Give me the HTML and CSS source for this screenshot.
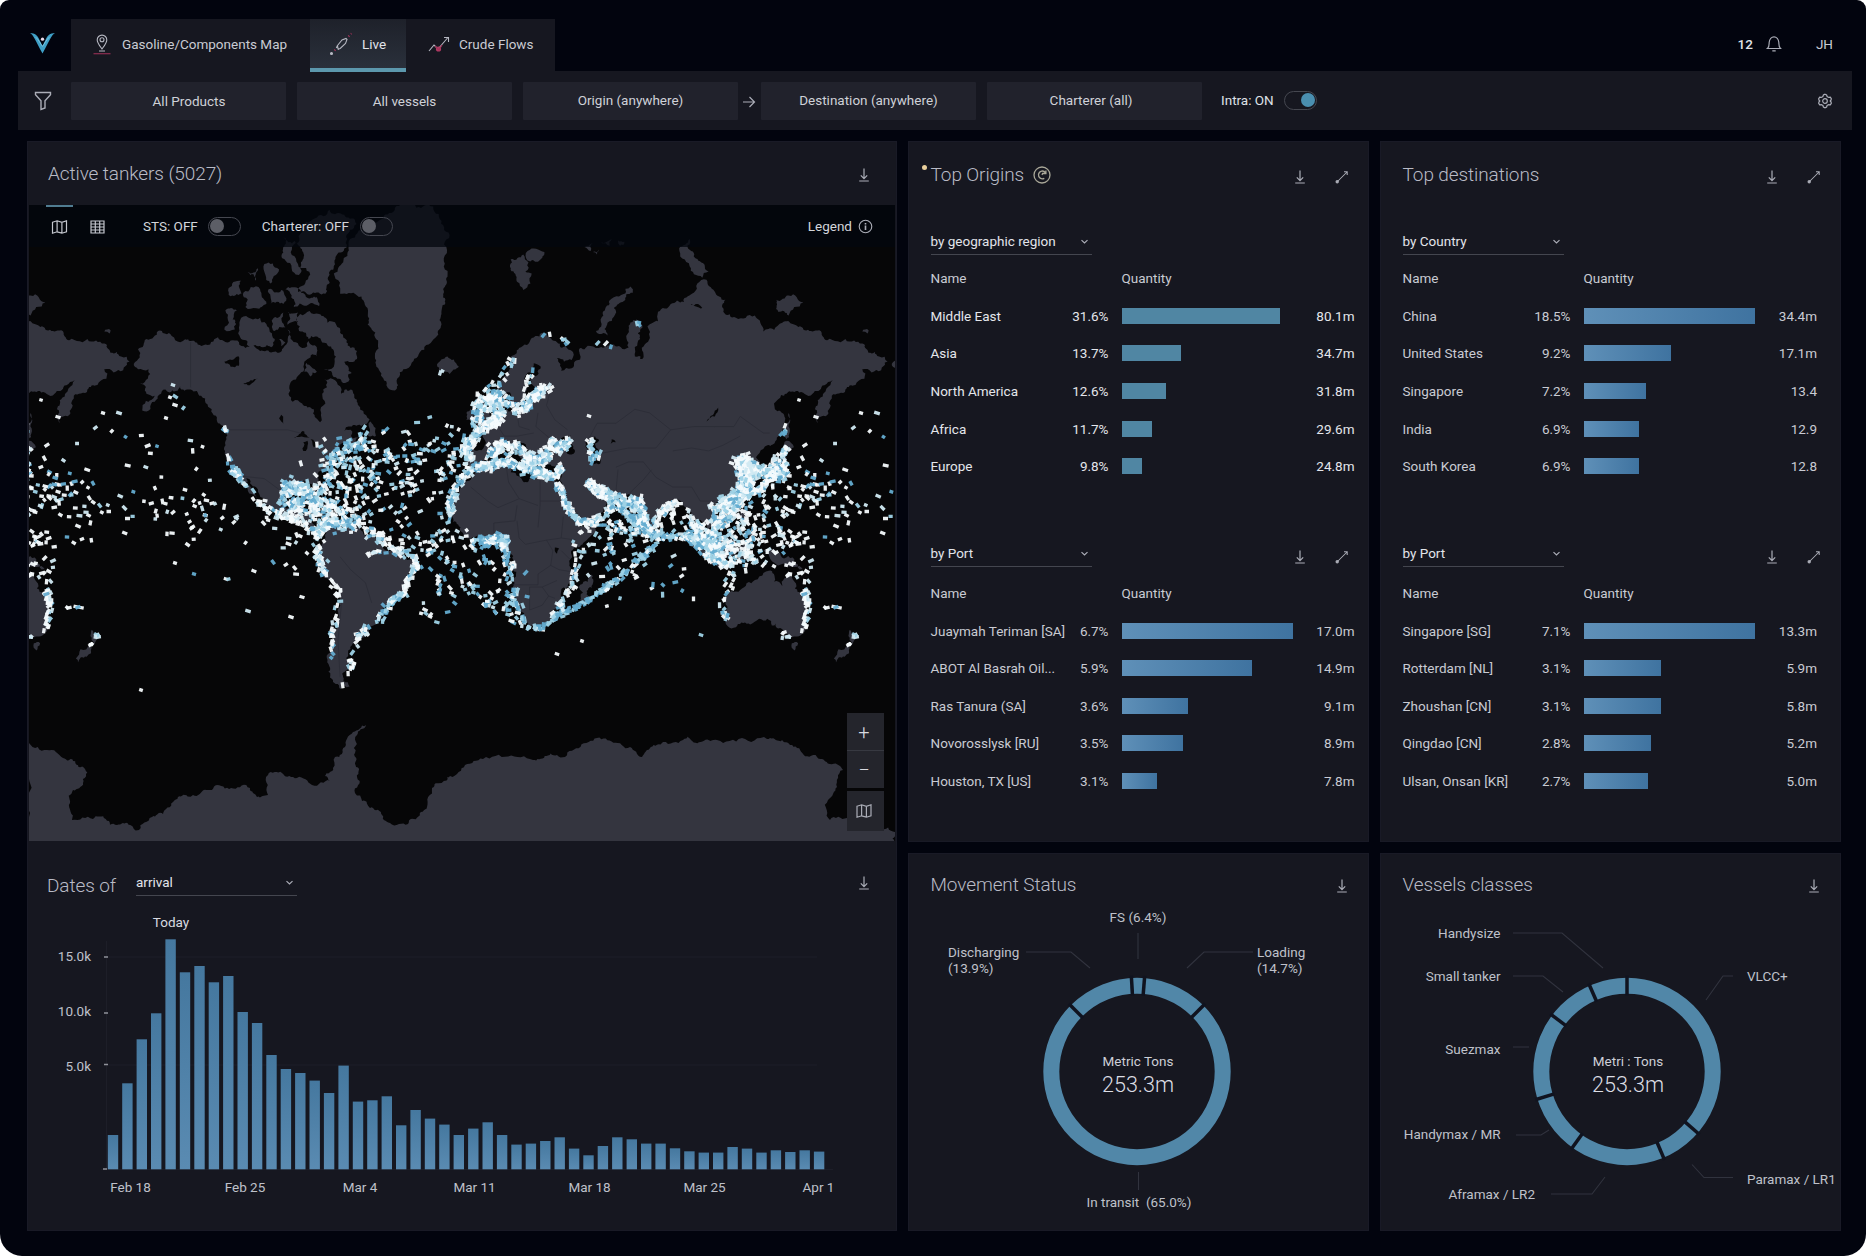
FILE: index.html
```html
<!DOCTYPE html>
<html lang="en">
<head>
<meta charset="utf-8">
<title>Tanker flows – Live</title>
<link rel="stylesheet" href="styles.css">
</head>
<body>
<svg class="sprite" aria-hidden="true">
  <symbol id="i-download" viewBox="0 0 16 16"><path d="M8 1.500v10M4.800 8.400 8 11.600l3.200-3.200M3.200 14h9.600"/></symbol>
  <symbol id="i-expand" viewBox="0 0 16 16"><path d="M3 13 13 3M10 2.800h3.200V6" stroke-width="1.050"/><circle cx="3.200" cy="12.800" r="1.100" fill="currentColor"/></symbol>
  <symbol id="i-chevron" viewBox="0 0 16 16"><path d="m4.800 6.500 3.200 3 3.200-3"/></symbol>
  <symbol id="i-map" viewBox="0 0 16 16"><path d="M1 3.200 5.600 1.800l4.800 1.600L15 1.800v11L10.400 14.200 5.600 12.800 1 14.200zM5.600 1.800v11M10.400 3.400v10.800"/></symbol>
  <symbol id="i-grid" viewBox="0 0 16 16"><path d="M1.500 2h13v12h-13zM1.500 5h13M1.500 8h13M1.500 11h13M5.800 2v12M10.200 2v12"/></symbol>
  <symbol id="i-info" viewBox="0 0 16 16"><circle cx="8" cy="8" r="6.700"/><path d="M8 7v4.600M8 4.300v1.500" stroke-width="1.700"/></symbol>
</svg>
<div class="app">
  <header class="topbar">
    <svg class="logo" viewBox="0 0 28 24"><path d="M1 1c5 0 8 3 9.500 6.500L14 14.500l3.500-7C19 4 22 1 27 1 23 3.500 22 8 14 22.500 6 8 5 3.500 1 1z" fill="#3e9fc6"/><path d="M7 5.500c3 2.500 5 7 7 9.500 2-2.500 4-7 7-9.500" fill="none" stroke="#7cc6df" stroke-width="1"/><circle cx="14" cy="7.500" r="1.700" fill="#e9d8e6"/></svg>
    <nav class="tabs">
      <a class="tab tab-map">
        <svg class="tab-icon" viewBox="0 0 20 24"><path d="M10 17c-3-4.200-4.800-6.400-4.800-9.100a4.800 4.800 0 0 1 9.600 0c0 2.700-1.800 4.900-4.800 9.100z"/><circle cx="10" cy="7.800" r="2"/><path d="M7 19h6"/><path d="M1.500 21.700h17" class="accent"/></svg>
        Gasoline/Components Map</a>
      <a class="tab tab-live active">
        <svg class="tab-icon wide" viewBox="0 0 24 24"><path d="M8.500 13.500 13 8l4-1.500 1 1-1.500 4-5.300 5-2.200.3zM8.500 13.500l-1.200 2.600M11.200 16.500l-2.400 1"/><path d="M19.500 4.500l.8-.8M22 2l.5-.5M5.500 18.500l.8-.8" class="accent" stroke-width="2"/><circle cx="2.500" cy="21.500" r="1" fill="currentColor"/></svg>
        Live</a>
      <a class="tab tab-flows">
        <svg class="tab-icon wide" viewBox="0 0 24 24"><path d="m2 19 5-6 4 4 9.500-11M17 5.500h4.500V10"/><circle cx="11.500" cy="17" r="2.600" fill="#b03a63" stroke="none"/><path d="m8 14 4 4 3-5" class="accent"/></svg>
        Crude Flows</a>
    </nav>
    <div class="user">
      <b class="count">12</b>
      <svg class="icon bell" viewBox="0 0 16 18"><path d="M1.500 13.500C3.500 12 3 9 3.200 7.200 3.500 4.200 5.500 1.800 8 1.800s4.500 2.400 4.800 5.400c.2 1.800-.3 4.800 1.700 6.300zM6.300 15.800h3.400"/></svg>
      <span class="initials">JH</span>
    </div>
  </header>

  <div class="filters">
    <svg class="icon funnel" viewBox="0 0 18 20"><path d="M1.500 1.500h15v2.300l-5.500 6V17l-4 1.500V9.800l-5.500-6z"/></svg>
    <button class="filter products">All Products</button>
    <button class="filter">All vessels</button>
    <button class="filter raised">Origin (anywhere)</button>
    <svg class="icon arrow" viewBox="0 0 14 14"><path d="M1 7h11.500M7.500 2l5 5-5 5"/></svg>
    <button class="filter raised">Destination (anywhere)</button>
    <button class="filter raised charterer">Charterer (all)</button>
    <span class="intra">Intra: ON</span><i class="toggle on"></i>
    <svg class="icon gear" viewBox="0 0 16 16"><path d="M8 1.200 9.600 2l.5 1.500 1.600.9 1.600-.3 1 1.600-.2 1.300-.9 1 .9 1 .2 1.300-1 1.600-1.600-.3-1.600.9L9.600 14 8 14.800 6.400 14l-.5-1.500-1.600-.9-1.600.3-1-1.600.2-1.300.9-1-.9-1-.2-1.300 1-1.600 1.600.3 1.600-.9L6.400 2z"/><circle cx="8" cy="8" r="2.300"/></svg>
  </div>

  <main class="board">
    <div class="panel left">
      <section class="tankers">
        <div class="head"><h2>Active tankers (5027)</h2><svg class="icon"><use href="#i-download"/></svg></div>
        <div class="map">
          <svg class="world" viewBox="0 0 866 636" id="world"></svg>
          <div class="map-bar">
            <span class="view current"><svg class="icon"><use href="#i-map"/></svg></span>
            <span class="view"><svg class="icon"><use href="#i-grid"/></svg></span>
            <span class="opt sts">STS: OFF</span><i class="toggle"></i>
            <span class="opt cht">Charterer: OFF</span><i class="toggle"></i>
            <span class="legend">Legend</span><svg class="icon info"><use href="#i-info"/></svg>
          </div>
          <div class="zoomer">
            <button>+</button><button class="minus">−</button>
            <button class="mini"><svg class="icon"><use href="#i-map"/></svg></button>
          </div>
        </div>
      </section>
      <section class="dates">
        <div class="dates-head"><h2>Dates of</h2><div class="select">arrival<svg class="icon"><use href="#i-chevron"/></svg></div><svg class="icon dl"><use href="#i-download"/></svg></div>
        <svg class="histogram" viewBox="0 0 870 325">
          <defs><linearGradient id="col" x1="0" y1="0" x2="0" y2="1"><stop offset="0" stop-color="#45789f"/><stop offset="1" stop-color="#5a8bb2"/></linearGradient></defs>
          <path class="rule" d="M79 51H790M79 159H790M74 263.500H806M79.500 35V263"/>
          <path class="tick" d="M77 51h4M77 107h4M77 158.500h4M76 263h4"/>
          <g id="columns" fill="url(#col)"></g>
          <g class="axis end"><text x="64" y="54.500">15.0k</text><text x="64" y="110">10.0k</text><text x="64" y="164.500">5.0k</text></g>
          <g class="axis mid"><text x="103.500" y="285.500">Feb 18</text><text x="218" y="285.500">Feb 25</text><text x="333" y="285.500">Mar 4</text><text x="447.500" y="285.500">Mar 11</text><text x="562.500" y="285.500">Mar 18</text><text x="677.500" y="285.500">Mar 25</text><text x="791.500" y="285.500">Apr 1</text></g>
          <text class="today" x="144" y="20.500">Today</text>
        </svg>
      </section>
    </div>

    <section class="panel ranks origins">
      <div class="head"><i class="dot"></i><h2>Top Origins</h2><svg class="badge" viewBox="0 0 18 18"><circle cx="9" cy="9" r="8"/><path d="M12.500 6.800C10.800 4 6.200 4.400 5.500 8.400c-.4 3.400 3 5.300 5.800 3.900M12.900 4.600v2.900H9.600l-.6 1.500"/></svg><span class="tools"><svg class="icon"><use href="#i-download"/></svg><svg class="icon"><use href="#i-expand"/></svg></span></div>
      <div class="rank strong">
        <div class="pick"><div class="select">by geographic region<svg class="icon"><use href="#i-chevron"/></svg></div></div>
        <div class="row th"><span>Name</span><span></span><span>Quantity</span></div>
        <div class="row"><span>Middle East</span><em>31.6%</em><i class="bar" style="width:158px"></i><b>80.1m</b></div>
        <div class="row"><span>Asia</span><em>13.7%</em><i class="bar" style="width:59px"></i><b>34.7m</b></div>
        <div class="row"><span>North America</span><em>12.6%</em><i class="bar" style="width:44px"></i><b>31.8m</b></div>
        <div class="row"><span>Africa</span><em>11.7%</em><i class="bar" style="width:30px"></i><b>29.6m</b></div>
        <div class="row"><span>Europe</span><em>9.8%</em><i class="bar" style="width:20px"></i><b>24.8m</b></div>
      </div>
      <div class="rank ports">
        <div class="pick"><div class="select">by Port<svg class="icon"><use href="#i-chevron"/></svg></div><span class="tools"><svg class="icon"><use href="#i-download"/></svg><svg class="icon"><use href="#i-expand"/></svg></span></div>
        <div class="row th"><span>Name</span><span></span><span>Quantity</span></div>
        <div class="row"><span>Juaymah Teriman [SA]</span><em>6.7%</em><i class="bar" style="width:171px"></i><b>17.0m</b></div>
        <div class="row"><span>ABOT Al Basrah Oil...</span><em>5.9%</em><i class="bar" style="width:130px"></i><b>14.9m</b></div>
        <div class="row"><span>Ras Tanura (SA]</span><em>3.6%</em><i class="bar" style="width:66px"></i><b>9.1m</b></div>
        <div class="row"><span>Novorosslysk [RU]</span><em>3.5%</em><i class="bar" style="width:61px"></i><b>8.9m</b></div>
        <div class="row"><span>Houston, TX [US]</span><em>3.1%</em><i class="bar" style="width:35px"></i><b>7.8m</b></div>
      </div>
    </section>

    <section class="panel ranks destinations">
      <div class="head"><h2>Top destinations</h2><span class="tools"><svg class="icon"><use href="#i-download"/></svg><svg class="icon"><use href="#i-expand"/></svg></span></div>
      <div class="rank">
        <div class="pick"><div class="select">by Country<svg class="icon"><use href="#i-chevron"/></svg></div></div>
        <div class="row th"><span>Name</span><span></span><span>Quantity</span></div>
        <div class="row"><span>China</span><em>18.5%</em><i class="bar" style="width:171px"></i><b>34.4m</b></div>
        <div class="row"><span>United States</span><em>9.2%</em><i class="bar" style="width:87px"></i><b>17.1m</b></div>
        <div class="row"><span>Singapore</span><em>7.2%</em><i class="bar" style="width:62px"></i><b>13.4</b></div>
        <div class="row"><span>India</span><em>6.9%</em><i class="bar" style="width:55px"></i><b>12.9</b></div>
        <div class="row"><span>South Korea</span><em>6.9%</em><i class="bar" style="width:55px"></i><b>12.8</b></div>
      </div>
      <div class="rank ports">
        <div class="pick"><div class="select">by Port<svg class="icon"><use href="#i-chevron"/></svg></div><span class="tools"><svg class="icon"><use href="#i-download"/></svg><svg class="icon"><use href="#i-expand"/></svg></span></div>
        <div class="row th"><span>Name</span><span></span><span>Quantity</span></div>
        <div class="row"><span>Singapore [SG]</span><em>7.1%</em><i class="bar" style="width:171px"></i><b>13.3m</b></div>
        <div class="row"><span>Rotterdam [NL]</span><em>3.1%</em><i class="bar" style="width:77px"></i><b>5.9m</b></div>
        <div class="row"><span>Zhoushan [CN]</span><em>3.1%</em><i class="bar" style="width:77px"></i><b>5.8m</b></div>
        <div class="row"><span>Qingdao [CN]</span><em>2.8%</em><i class="bar" style="width:67px"></i><b>5.2m</b></div>
        <div class="row"><span>Ulsan, Onsan [KR]</span><em>2.7%</em><i class="bar" style="width:64px"></i><b>5.0m</b></div>
      </div>
    </section>

    <section class="panel rings">
      <div class="head"><h2>Movement Status</h2><svg class="icon"><use href="#i-download"/></svg></div>
      <svg class="ring" viewBox="0 0 461 316">
        <circle class="donut" cx="229" cy="156.500" r="85.700"/>
        <g class="cuts" data-cx="229" data-cy="156.500" data-angles="-45.2 -3.4 4.6 45.2"></g>
        <path class="leader" d="M230 18v26M118 37h45l19 16M345 37h-49l-17 16M230.500 257v18"/>
        <g class="label"><text class="mid" x="230" y="6.500">FS (6.4%)</text><text x="40" y="41.500">Discharging</text><text x="40" y="57.500">(13.9%)</text><text x="349" y="41.500">Loading</text><text x="349" y="57.500">(14.7%)</text><text class="mid" x="231" y="291.500" xml:space="preserve">In transit  (65.0%)</text></g>
        <text class="unit" x="230" y="150.500">Metric Tons</text><text class="total" x="230" y="177">253.3m</text>
      </svg>
    </section>

    <section class="panel rings">
      <div class="head"><h2>Vessels classes</h2><svg class="icon"><use href="#i-download"/></svg></div>
      <svg class="ring" viewBox="0 0 461 316">
        <circle class="donut" cx="247" cy="156.500" r="85.700"/>
        <g class="cuts" data-cx="247" data-cy="156.500" data-angles="0 131 157 215.7 252.900 306.900 336.500"></g>
        <path class="leader" d="M133 18h49l41 35M133 61h30l20 16M133 132h16M136 220h25l8-5M171 279h41l13-17M353 61h-10l-17 24M353 262.500h-29l-12-13"/>
        <g class="label"><text class="end" x="120.500" y="22.500">Handysize</text><text class="end" x="120.500" y="65.500">Small tanker</text><text class="end" x="120.500" y="138.500">Suezmax</text><text class="end" x="120.500" y="224">Handymax / MR</text><text class="end" x="155" y="284">Aframax / LR2</text><text x="367" y="65.500">VLCC+</text><text x="367" y="269">Paramax / LR1</text></g>
        <text class="unit" x="248" y="150.500">Metri : Tons</text><text class="total" x="248" y="177">253.3m</text>
      </svg>
    </section>
  </main>
</div>
<script src="charts.js"></script>
</body>
</html>
```
FILE: styles.css
```css
* { box-sizing: border-box; }
html { background: #fff; }
body { margin: 0; font-family: Roboto, "Liberation Sans", sans-serif; font-size: 13.5px; color: #c9cbd3; }
h2 { margin: 0; font-size: 19px; font-weight: 300; color: #b9bbc6; letter-spacing: -.1px; }
button { font: inherit; color: inherit; border: 0; padding: 0; }
i, em { font-style: normal; }
.sprite { position: absolute; width: 0; height: 0; }
.icon { width: 16px; height: 16px; fill: none; stroke: currentColor; stroke-width: 1.2; flex: none; color: #abadb7; }

.app { width: 1866px; height: 1256px; padding: 19px 14px 25px 18px; background: #02040e; border-radius: 9px 9px 22px 22px; overflow: hidden; }

.topbar { display: flex; height: 52px; align-items: center; }
.logo { width: 27px; height: 23px; margin: 0 15px 3px 11px; }
.tabs { display: flex; height: 53px; background: #161720; align-self: flex-start; width: 484px; }
.tab { display: flex; align-items: center; padding-bottom: 4px; font-size: 13.5px; }
.tab-icon { width: 20px; height: 24px; fill: none; stroke: #b5b7c1; stroke-width: 1.1; color: #b5b7c1; flex: none; }
.tab-icon.wide { width: 24px; }
.tab-icon .accent { stroke: #a33258; }
.tab-map { width: 239px; padding-left: 21px; gap: 10px; }
.tab-live { width: 96px; padding-left: 19px; gap: 9px; border-bottom: 4px solid #5c98ad; padding-bottom: 0; background: linear-gradient(#1e212a, #2a303b); color: #e2e4ea; }
.tab-flows { padding-left: 21px; gap: 8px; }
.user { display: flex; align-items: center; margin-left: auto; padding: 0 19px 2px 0; }
.count { font-weight: 500; color: #dfe1e8; }
.bell { width: 16px; height: 18px; margin: 0 34px 0 13px; }

.filters { display: flex; align-items: center; height: 59px; background: #161720; padding: 0 19px 0 16px; }
.funnel { width: 18px; height: 20px; margin-right: 19px; stroke-width: 1.4; }
.filter { width: 215px; height: 38px; background: #21222c; color: #cfd1d8; border-radius: 1px; margin-right: 11px; }
.filter.products { padding-left: 21px; }
.filter.raised { padding-bottom: 2px; }
.filter:nth-of-type(3) { margin-right: 4px; }
.arrow { width: 14px; height: 14px; margin: 2px 5px 0 0; }
.filter.charterer { padding-right: 7px; margin-right: 19px; }
.intra { color: #dfe1e7; padding-bottom: 1px; margin-right: 10px; }
.gear { margin-left: auto; }
.toggle { width: 33px; height: 19px; border: 1.500px solid #454750; border-radius: 10px; padding: 1px; flex: none; }
.toggle::before { content: ""; display: block; width: 14px; height: 14px; border-radius: 7px; background: #5c5e66; }
.toggle.on::before { margin-left: auto; background: #4a8fb0; }

.board { display: grid; grid-template-columns: 870px 461px 461px; grid-template-rows: 701px 378px; gap: 11px; margin: 11px 0 0 9px; }
.panel { background: #161720; box-shadow: inset 0 0 0 1px #191a26; }
.left { grid-row: span 2; }
.head { display: flex; align-items: center; height: 67px; }
.tools { display: flex; gap: 26px; margin-left: auto; }

.tankers .head { height: 64px; padding: 0 25px 0 21px; }
.tankers .head .icon { margin: 3px 0 0 auto; }
.map { position: relative; height: 636px; margin: 0 2px; background: #060607; overflow: hidden; }
.world { display: block; width: 866px; height: 636px; }
.map-bar { position: absolute; inset: 0 0 auto 0; height: 42px; display: flex; align-items: center; padding: 0 22px 0 17px; background: rgba(3, 7, 15, .75); color: #d3d5db; }
.view { display: flex; align-items: center; justify-content: center; width: 27px; height: 42px; margin-right: 11px; border-top: 2px solid transparent; }
.view.current { border-color: #507c91; }
.view .icon { width: 17px; height: 16px; color: #c4c6ce; }
.sts { margin: 0 10px 0 21px; }
.cht { margin: 0 11px 0 21px; }
.legend { margin-left: auto; margin-right: 6px; }
.info { width: 15px; height: 15px; }
.zoomer { position: absolute; right: 11px; bottom: 10px; width: 37px; display: grid; grid-template-rows: 37px 38px 43px; }
.zoomer button { background: #24252c; color: #d8dae0; font-size: 20px; font-weight: 300; line-height: 36px; padding-right: 3px; }
.zoomer .minus { border-top: 1px solid #373941; }
.zoomer .mini { margin-top: 3px; display: flex; align-items: center; justify-content: center; }
.zoomer .icon { width: 16px; height: 16px; }

.select { display: flex; align-items: center; justify-content: space-between; width: 161px; height: 27px; border-bottom: 1.500px solid #44464f; color: #e2e4ea; }
.select .icon { width: 15px; height: 15px; stroke-width: 1.300; }

.dates-head { display: flex; align-items: flex-start; height: 65px; padding: 28px 25px 0 20px; }
.dates-head h2 { padding-top: 5px; width: 89px; }
.dates-head .dl { margin: 6px 0 0 auto; }
.histogram { display: block; width: 870px; height: 325px; }
.histogram text, .ring text { fill: #bfc1ca; font-size: 13.500px; }
.rule { stroke: #1d1e28; fill: none; }
.tick { stroke: #8f9199; stroke-width: 1.300; }
.end, .end text { text-anchor: end; }
.mid, .mid text, .histogram .today { text-anchor: middle; }
.histogram .today { fill: #d9dbe1; }

.ranks { padding: 0 14.500px 0 22.500px; }
.ranks .head .tools { padding-top: 5px; }
.origins .tools { margin-right: 4.500px; }
.destinations { padding-right: 24px; }
.destinations .tools { margin-right: -5px; }
.dot { width: 5px; height: 5px; border-radius: 3px; background: #e9cf9c; margin: -14px 2px 0 -9px; }
.dot + h2 { margin-left: 2px; }
.badge { width: 18px; height: 18px; margin: 1px 0 0 9px; fill: none; stroke: #a9a798; stroke-width: 1.300; }
.rank { padding-top: 20px; height: 285px; }
.rank.ports { padding-top: 47px; }
.pick { display: flex; margin-bottom: 4.500px; }
.ports .pick { margin-bottom: 7.300px; }
.pick .tools { padding-top: 9px; }
.row { display: grid; grid-template-columns: 128px 50px 13px 1fr auto; align-items: center; height: 37.600px; }
.row span:first-child { white-space: nowrap; }
.row em { text-align: right; }
.row .bar, .row.th span:last-child { grid-column: 4; }
.row b { font-weight: 400; }
.destinations .row { grid-template-columns: 118px 50px 13px 1fr auto; }
.strong .row:not(.th) { color: #e4e6eb; }
.bar { height: 16px; background: linear-gradient(90deg, #5f90b8, #3f73a0); }
.strong .bar { background: #5086a3; }

.rings .head { height: 62px; padding: 0 19px 0 22.500px; }
.rings .head .icon { margin: 4px 0 0 auto; }
.ring { display: block; width: 461px; height: 316px; overflow: visible; }
.donut { fill: none; stroke: #5187a8; stroke-width: 16; }
.cuts line { stroke: #10131f; stroke-width: 3.500; }
.leader { fill: none; stroke: #31333e; stroke-width: 1.100; }
.ring .unit { text-anchor: middle; fill: #cdcfd7; }
.ring .total { text-anchor: middle; font-size: 21.500px; font-weight: 300; fill: #dcdee5; }

.land { fill: #34353f; }
.water { fill: #060607; }
.borders { fill: none; stroke: #2b2c36; stroke-width: .8; }
.ships { fill: none; stroke-width: 3.300; opacity: .95; }
```
FILE: charts.js
```js
const NS = 'http://www.w3.org/2000/svg';
function add(parent, tag, attrs) {
  const el = document.createElementNS(NS, tag);
  for (const k in attrs) el.setAttribute(k, attrs[k]);
  parent.appendChild(el);
  return el;
}

/* arrivals histogram: column heights in px, one per day */
const arrivals = [34.3,86,130,156,230,197,203.300,187,193.300,157.300,146.300,114.300,100.300,96.300,88.700,76.300,103.700,67.700,69,73,44,59.300,50.700,44.700,34.300,40.700,47,34.300,24.700,25.700,28.300,32,20.700,14,23.300,32,30,25.700,25.700,21,18,16.700,16.700,22.300,20.700,16.700,19,17.300,19,17.700];
const columns = document.getElementById('columns');
arrivals.forEach((h, i) => add(columns, 'rect', { x: (80.8 + i * 14.41).toFixed(1), y: (263.3 - h).toFixed(1), width: 10.4, height: h }));

/* gaps between donut segments */
document.querySelectorAll('.cuts').forEach(g => {
  const cx = +g.dataset.cx, cy = +g.dataset.cy;
  g.dataset.angles.split(' ').forEach(a => {
    const s = Math.sin(a * Math.PI / 180), c = -Math.cos(a * Math.PI / 180);
    add(g, 'line', { x1: cx + 76 * s, y1: cy + 76 * c, x2: cx + 96 * s, y2: cy + 96 * c });
  });
});

/* seeded random so the map is the same on every load */
let seed = 5027;
function rnd() {
  seed = (seed + 0x6D2B79F5) | 0;
  let t = Math.imul(seed ^ (seed >>> 15), 1 | seed);
  t = (t + Math.imul(t ^ (t >>> 7), 61 | t)) ^ t;
  return ((t ^ (t >>> 14)) >>> 0) / 4294967296;
}
const gauss = () => (rnd() + rnd() + rnd() - 1.5) * 1.2;

/* Web Mercator */
const WORLD = 758;
const px = lon => 458.5 + lon * WORLD / 360;
const py = lat => 343.5 - WORLD / (2 * Math.PI) * Math.log(Math.tan(Math.PI / 4 + lat * Math.PI / 360));
const parse = s => s.trim().split(/\s+/).map(p => p.split(',').map(Number));
const project = s => parse(s).map(([a, b]) => [px(a), py(b)]);

function rough(pts, amp) {
  const out = [];
  const split = (a, b, d) => {
    const len = Math.hypot(b[0] - a[0], b[1] - a[1]);
    if (len < 3 || d === 0) return;
    const k = (rnd() - .5) * Math.min(amp, .45 * len) * 1.2;
    const m = [(a[0] + b[0]) / 2 - (b[1] - a[1]) / len * k, (a[1] + b[1]) / 2 + (b[0] - a[0]) / len * k];
    split(a, m, d - 1); out.push(m); split(m, b, d - 1);
  };
  pts.forEach((p, i) => { out.push(p); split(p, pts[(i + 1) % pts.length], 4); });
  return out;
}
const d = pts => 'M' + pts.map(p => p[0].toFixed(1) + ' ' + p[1].toFixed(1)).join('L') + 'Z';

const land = [
  // North and Central America
  '-168,65.6 -166,68.3 -162,70 -156.500,71.300 -150,70.500 -141,69.700 -135,69 -128,70.300 -122,69.800 -115,68.500 -108,68 -102,67.800 -97,68.500 -95,71.500 -91,69.500 -88,68.500 -85,69.700 -82,69 -81,67 -86,66.300 -87,64.500 -93,62 -94.500,59 -92.500,57 -88,56.500 -82.500,55 -82,52.800 -79.500,51.300 -79,54 -77,56.500 -78.500,59 -77.500,62.300 -73.500,62.400 -70,60.800 -69.500,59 -65,60 -62,57.500 -59,54.500 -56,52.200 -60,50.200 -66,50 -69,48 -65,49 -64.500,46.500 -61,46.500 -64.500,44 -67,44.800 -70.500,43.200 -70,41.700 -74,40.600 -75.500,37.500 -76,35.200 -80.500,32 -81.300,29.500 -80.200,25.500 -81.700,26 -82.800,29 -85,29.800 -89.500,29.800 -94,29.500 -97.300,27.500 -97.700,22.500 -95.500,18.700 -91,18.700 -90.300,21 -87,21.400 -88,18 -88.500,16 -84,15.800 -83.300,12 -82,9 -79,9.500 -77,8.500 -78,7.300 -81,7.600 -84,9.500 -86,11.500 -88,13.200 -94,16 -97,15.800 -101,17.500 -105.300,20 -105.500,22.500 -109,26 -113,31.200 -114.700,31.500 -112,27.500 -109.700,23 -112,25 -115,28 -117,32.500 -120.600,34.600 -122.500,37.500 -124.300,40.500 -124,46 -124.500,48.300 -123,49 -128,51 -131,55 -136,58.500 -141,60 -146,60.800 -151,59.300 -153,60 -158,57 -164,54.700 -158,58.500 -162,59 -165,61.500 -161,64.500 -166,64.500',
  // Greenland
  '-73,78.300 -66,80.500 -55,82.300 -42,83.300 -28,83.400 -18,81.500 -19,78 -20,75.500 -22,72.500 -24,70.500 -30,68.200 -36,65.800 -40,64.500 -42.500,61 -44,59.800 -48,61 -51,64 -53.500,67 -52,69 -55,71.500 -57,74.500 -62,76 -70,76.200',
  // Arctic archipelago
  '-63,82.500 -75,83.100 -88,81.800 -92,80.800 -90,79.200 -85,78 -90,76.400 -77,76.200 -75,78.500 -68,80.500',
  '-80,73.700 -89,73.700 -89.500,71.300 -85,70 -79,69.800 -76,69 -72,67 -73,65 -78,64.500 -72,62.800 -66,61.900 -66,63.500 -64.500,63.700 -68,66 -62,66.500 -62,68 -67,69.500 -70,71 -76,72.500',
  '-117,73.200 -108,73.200 -105,72.300 -101,70 -102,68.800 -113,68.700 -117,70 -118,71.800',
  '-125,71.500 -124.500,74.200 -119,74.200 -120,71.500', '-102,73 -97,73.900 -96,71.800 -101,71.300',
  '-116,76.300 -108,76.700 -105,75 -115,74.600', '-104,76.700 -98,76.600 -97,75 -103,75', '-96,76.700 -90,76.800 -81,75.800 -80,74.700 -92,74.600 -93,76',
  '-123,76.800 -117,77.600 -116,76.200 -122,75.900', '-114,78.400 -109,78.800 -110,77.600', '-106,79.200 -99,78.700 -103,77.300', '-97,81.300 -88,80.300 -89,78.300 -96,79.500', '-95,74 -90,73.900 -90,72.600 -95,72.200', '-99,70 -96,69.500 -98,68.800',
  '-86,65.800 -81,64 -84,63 -87,64', '-59,47.700 -55.500,51.500 -53,47 -56,46.900',
  // Iceland, Svalbard, Franz Josef Land, Novaya Zemlya, Severnaya Zemlya
  '-24,65.500 -22,66.400 -16,66.400 -13.600,65 -18,63.500 -22.500,64',
  '11,79.600 17,80 18,78.500 21,78.300 17,76.600 14,77.500', '19,80.300 27,80.200 24,79.400 19,79.500',
  '46,80.600 50,80.900 49,80.300', '54,81 59,81.200 58,80.700', '62,81.100 65,81 63,80.700', '50,80.200 53,80.400 52,80',
  '51.500,71.300 55,73.500 60,75.800 68,77 69,76.300 60,74.500 57,72.500 57,70.600 53,70.800',
  '91,80.500 96,81.200 100,79.500 105,78.500 102,77.900 96,79', '137,75.500 143,76 150,75.200 143,73.500 138,74', '178,71.200 181,71.400 180.500,70.900',
  // South America
  '-77,8.500 -75.500,10.700 -72,12.200 -71,11 -68,11.500 -64,10.200 -60,8.500 -57,6 -52,5 -50,1 -48,-1 -44,-2.700 -40,-3 -35.300,-6 -35,-9 -38.500,-13 -39,-18 -41,-22 -45,-23.500 -48.500,-26 -50,-29.500 -53.500,-34 -57,-34.700 -57,-37.500 -62,-39 -63,-41 -65,-43 -67,-46 -66,-48 -69,-51 -68.500,-53 -65.500,-54.700 -70,-55.300 -74,-52.500 -75.500,-48 -74,-43 -73,-38 -71.500,-32 -70.300,-24 -70.400,-18.400 -76,-14 -79,-8 -81.300,-5 -80,-2.500 -80,0.500 -77.500,4',
  // Africa
  '-6,35.800 -2,35.200 3,36.900 10,37.300 11,34 15,32.300 19.500,30.400 22,32.800 29,31 32.500,31.200 34.500,28 35.500,24 37.300,21 38.500,18 43,12.500 44,10.500 51.200,11.900 48,5 44,1 40,-3 39,-7 40.500,-11 40.500,-15 35,-20 35.500,-24 32.700,-27 30,-31.500 26,-34 20,-34.800 18.200,-32 15,-27 12,-18 13.700,-11 12,-5 9,-1 9.500,4 5,4.300 3,6.400 -2,4.800 -8,4.300 -13,8.500 -16.500,12.500 -17.300,15 -16.200,19 -17,21.500 -13,27.500 -9.700,30.500',
  // Eurasia
  '34.500,31.500 36,36.700 30.500,36.400 27.300,37 26.300,40 29,41.200 33,42 38,41 41.500,41.600 37,45.300 39.500,47.200 35,46.300 33,44.600 30.700,46.500 28,43.500 28.500,41.200 23.500,40.500 24,38 22.500,36.600 19.500,40.500 19,42.300 13.700,45.500 12.400,44.500 14,42.500 18.300,40 16,38 15,40.300 12,42 8.500,44.300 3.500,43.300 3,41.700 -0.500,39 -2,36.800 -5.500,36.100 -9,37 -9.300,39 -8.700,43.200 -1.500,43.500 -1.500,46 -4.500,48.300 1.500,50.200 4.500,52.500 8.500,53.800 8.300,57 10.500,57.500 10,54.300 14,54 19,54.500 21.200,57 24,57.200 24,59.300 29.500,60 22.500,60 21.300,63 25.300,65 22,65.700 17.500,62 18,59.500 16.300,56.500 13,55.500 10.700,59.300 7,58 5,60 5.300,62 11,65 15,68.500 21,70.200 28,71 33,69.500 41,67.300 40,66.300 33,66.700 35,64.200 40,64.700 44,66.400 44,68.500 54,68.700 60,69.200 67,68.600 67,71.500 71,73 72.500,70 70,67 74,67 76,72 81,72.700 81,74 87,75 98,76.300 104,77.700 113,75.500 112,74 118,73.200 127,73.500 131,71.200 140,72.500 150,71.500 160,70 170,70 178,69.300 186,67 190,66 187,64.300 178,64.500 179,62.500 170,60 163.500,58.500 163,56 158.500,53 156.700,51 155.500,55 158,58 164,62.200 160,61 155,59.300 148,59.300 142,59 136.500,55 141,53 140,48.500 135.500,44.200 131,42.700 127.500,39.700 129.500,36 126.500,34.500 126,37.500 121.500,39 118,39.200 122,37 119.500,35 122,31 120,27 114.500,22.500 109.500,21.500 106,19.500 109,13 107,10.500 105,9 102,12.500 100,13.300 99.300,9.500 103.500,4 103.500,1.400 101,3 98.300,8 98.500,14 97,17 94.500,16 93.500,19.500 91,22.500 87,21.500 82,16.500 80,14 79.500,10.500 77.500,8.200 75,12 73,18 72,21 69,22.300 67,25 61,25.200 57,27 51,28 48.500,30.300 48,29 50,26.500 51.500,25 54,24.200 56.300,26 57,24 59.800,22.500 55,17.500 45,12.900 43,13 42.700,16.500 39,21 35,28',
  // British Isles
  '-5.500,50.100 1.300,51.200 1.700,52.700 -1,54.700 -2,57.500 -5,58.600 -5.500,56 -3,54 -4.500,52', '-10,52 -6.300,52.200 -6,54.500 -8,55.200 -10,54',
  // East and South-East Asia
  '130,31.300 131.500,33.500 136,33.700 140.800,35.700 142,39.500 141.300,41.400 139.800,38.500 136.500,36.500 131,34.300', '140,42 145.500,43.300 142,45.500 140.500,43', '142,46 143.500,49.500 143,54 142,51', '120.200,23 121.700,25.200 121,22', '120.500,18.500 122.200,18.300 122,15 124,13 121,13.700 120,16', '122,7 125.500,9.500 126.500,7 125,5.700', '109,1.500 113,3.500 117,7 119,5 117.500,1 116,-3.800 110.500,-3', '95.300,5.600 100,2.500 104,-2 106,-5.800 102,-4 98,1', '105.300,-6.800 110,-6.700 114.500,-7.700 114,-8.700 107,-7.700', '119.500,0.500 125,1.500 121,0 123,-4.500 120,-5.500 119,-3', '131,-0.700 138,-1.700 145,-4.300 150.500,-10.500 143,-8.500 138,-8 134,-4', '80,9.500 81.800,7.500 80.200,6',
  // Oceania, Madagascar, Caribbean
  '112.500,-22 114,-31 114,-34.500 118,-35 124,-33.500 129,-31.600 135,-34.300 137,-33.500 138,-35.500 144,-38.500 147,-38.500 149.500,-37 152,-31 152,-25.500 149,-21 146,-18.700 145,-14.500 142.500,-10.800 141,-14 140,-17.600 136,-15.500 136,-12 131,-11.500 127,-14.800 123,-16.300 120,-19.300', '144.500,-41 147.500,-41 146,-43.500', '172,-36 176.500,-38.800 173,-41.800 172,-39', '171,-41.500 172,-42.500 165.500,-47.500 164.500,-46.200', '49.500,-12.200 50.300,-15.500 47,-25 44,-24 44,-17', '-84.500,22 -80,23.200 -74.500,20.200 -78,20.500', '-74,19.800 -68.700,18.500 -74,18.300',
];
const water = [
  '47,45.500 51,47 53,45.500 51,44.500 53,42 53.500,37.300 50,37.500 49.500,41 47,43', '104,51.500 109.500,55.500 108,53', '32,0.500 34,0 33,-2.500', '-92,46.700 -87,48.500 -84.500,46.500 -87,46.600', '-87.500,42 -86.300,42 -85.500,45.500 -87.500,45', '-84,46 -80,44.500 -82.500,43.300', '-125,66 -118,67 -118,65.200 -122,65', '-116,61.500 -109,62.700 -113,61', '-98,53.500 -96.500,50.500 -99,52.500', '59,46 61,45 58.500,44.500', '72,68.500 73.500,68 73.500,66.500 72.500,66.500', '96,74.800 100,75 102,74.500',
];
const ice = '0,538 18,545 34,553 56,564 54,578 44,585 41,598 43,615 64,614 88,620 110,625 123,612 134,609 144,597 164,590 188,580 221,583 228,592 239,590 239,570 253,568 268,573 283,580 301,576 296,571 304,563 306,552 316,542 324,527 337,520 328,530 326,548 328,572 326,588 341,603 361,618 379,619 398,602 403,583 421,571 436,560 454,554 504,555 528,550 536,552 568,533 601,542 613,552 634,537 654,535 658,530 662,535 688,535 738,534 761,540 788,552 814,565 808,582 799,595 801,615 818,613 851,622 866,627 866,640 0,640';
const borders = [
  '-123,49 -95,49 -89,48', '-141,60.500 -141,69.500', '-117,32.500 -106,31.500 -97.500,26', '-69,-22 -71,-40 -70,-52', '-70,-4 -65,-10 -58,-16 -55,-25',
  '-8,28 0,22 5,19 15,23 24,20', '9,36 10,30 15,23', '25,31.500 25,20 24,10', '25,22 37,22', '3,6.500 3,12 13,13 14,20', '14,13 15,5 18,2 28,4 31,-1 30,-8 24,-12 24,-17 12,-17', '28,4 35,5 42,4', '36,15 35,5', '35,-1 39,-5', '30,-8 34,-10 40,-11', '33,-15 26,-18 20,-18 20,-28', '26,-18 29,-22 26,-26 20,-28', '29,-22 32,-23',
  '30,60 28,56 32,52 38,49', '24,54 23,50 30,46', '48,46 52,51 61,51 70,55 77,54 87,49 98,50 108,50 117,50 120,53 131,48 134,48', '53,41 60,42 67,43 74,43 80,43 87,49', '61,36 67,38 74,38 80,32 88,28 97,28 101,22 108,22', '61,26 62,35', '67,25 74,31 78,35', '88,42 97,43 105,42 112,44 120,47', '5,50 8,47 14,47 22,48', '6,43.500 7,47', '14,54 15,50 20,49',
];

const world = document.getElementById('world');
const wrap = (pts, f) => [0, -WORLD, WORLD].map(o => pts.map(p => [p[0] + o, p[1]])).filter(ps => ps.some(p => p[0] > -5 && p[0] < 871)).map(f).join('');
add(world, 'path', { d: d(rough(parse(ice), 5)) + land.map(s => wrap(rough(project(s), 7), d)).join(''), class: 'land' });
add(world, 'path', { d: water.map(s => wrap(rough(project(s), 2), d)).join(''), class: 'water' });
add(world, 'path', { d: borders.map(s => wrap(project(s), ps => d(ps).slice(0, -1))).join(''), class: 'borders' });

/* vessels: lane | count | spread px | share of laden (blue) */
const lanes = [
  // Europe
  ['-9,37 -10,43 -5,48 0,50 4,52.500 7,54.500', 160, 4.500, .35], ['3,51.500 5,54 3,57 5,59', 110, 7, .35], ['-5,50 -5,54 -3,58', 50, 6, .5], ['-2,54 0,58 4,60', 45, 8, .5], ['8,57 11,56 15,55 19,56 21,58 24,59.500 29,60', 110, 5, .3], ['5,60 8,64 13,67', 14, 4, .6], ['17,60 20,63 23,65', 9, 4, .3],
  ['-6,35.800 0,36.500 6,38 11,37.500 16,35.500 22,34.500 28,33 32,31.800', 200, 4, .5], ['1,40 4,43 9,43.800 11,42', 65, 5, .25], ['13,44.500 15,42.500 19,40.500 18,37', 60, 5, .25], ['22,37 24,38 26,40 29,41', 65, 5, .4], ['29,43 33,43 38,44.500 37,46', 60, 5, .45], ['30,45 31,46', 12, 3, .2], ['33,33 35,36', 24, 3, .3], ['-6,36 -10,34 -15,28 -17,22 -18,15', 80, 4, .4], ['50,38 51,41 49,44 51,45', 26, 4, .7], ['48,46 49,45', 4, 3, .1],
  // Red Sea, Gulf, India
  ['32.500,30 35,26 38,20 42,14 44,12.300', 90, 2.300, .5], ['44,12 50,13 56,16 60,20', 60, 3, .3], ['48,29.500 51,27.500 54,25.800 57,25 59,24', 110, 4, .4], ['59,24 64,22 69,21 72,18', 95, 5.500, .6], ['70,22 72,20', 35, 6, .4], ['60,23 66,16 72,11 77,7 80,5.500 88,5.700 95,6', 125, 3, .75], ['73,17 75,11 77,8', 60, 4, .5], ['80,6 81,10 80,14 83,17 88,21 91,21', 50, 4, .2], ['45,12 55,12 65,9 76,7', 50, 5, .4], ['97,16 96,12 97,8', 14, 5, .3], ['85,20 90,14 84,12', 14, 9, .1],
  // Malacca, South China Sea, Far East
  ['95,6 99,4 103,1.300 105,2', 110, 4, .65], ['104,1 107,-4 112,-6 116,-7', 95, 6, .5], ['105,2 108,7 111,12 115,18 119,23 122,28', 150, 5, .7], ['105,2 108,0 113,2 117,4', 100, 10, .3], ['100,12 101,9 104,5', 45, 5, .3], ['107,10 109,14 108,19 112,21', 50, 5, .3], ['112,21 115,22 119,24', 80, 5, .3], ['119,25 122,30 122,35', 160, 8, .4], ['119,38 122,38 123,35', 105, 6, .25], ['124,33 128,34 130,35 134,34 139,34.500 141,37', 140, 5.500, .35], ['125,37 126,34', 45, 5, .3], ['121,22 127,27 133,31 139,34', 75, 8, .55], ['136,35 140,41 142,43', 36, 5, .2], ['140,47 142,50', 6, 3, .9], ['118,18 121,13 124,8 125,2', 60, 10, .2], ['117,3 120,-2 127,-4 132,-2', 65, 12, .15],
  // Indian Ocean and Africa
  ['20,-35.500 27,-35 33,-30 45,-26 58,-17 70,-7 80,2', 135, 2.400, .95], ['31,-31 35,-25 41,-17 42,-8 44,-2', 42, 4, .2], ['45,-2 60,0 70,0', 30, 24, .5], ['55,-10 75,0', 18, 20, .5], ['60,-25 100,-10', 14, 24, .7],
  ['18,-34.500 13,-26 11,-16 11,-8 8,-1', 65, 4, .65], ['9,3.500 4,5 -1,3.500 -4,4', 95, 4.500, .8], ['9,3 7,1', 15, 4, .3], ['18,-35 6,-28 -8,-18 -20,-5 -30,1', 42, 6, .8], ['-18,14 -16,8 -8,2 0,-5', 28, 11, .3], ['0,-10 10,-30', 20, 20, .5],
  // Atlantic
  ['-74,40 -68,41 -62,44 -58,47', 60, 9, .5], ['-75,38 -72,33 -70,28', 60, 20, .5], ['-72,38 -55,42 -35,45 -10,47', 58, 17, .45], ['-72,30 -50,36 -25,37 -8,37', 80, 17, .5], ['-65,22 -45,28 -18,34', 46, 20, .4], ['-65,15 -45,20 -20,27', 22, 24, .3],
  ['-97,26 -94,28.500 -90,28 -87,29', 80, 6, .75], ['-96,20 -92,23 -85,24 -80,25', 90, 8, .55], ['-83,22 -76,20 -68,18 -62,16', 60, 7, .3], ['-80,10 -75,12 -70,13 -62,11', 100, 6, .5], ['-88,18 -80,17 -70,15', 70, 10, .3], ['-62,11 -57,8 -50,5', 30, 5, .3], ['-80,26 -77,30 -76,34', 20, 5, .3],
  ['-50,2 -42,-1 -35,-4 -34,-9 -38,-15 -40,-21', 70, 3, .3], ['-40,-21 -45,-24 -48,-27 -52,-33', 50, 3, .8], ['-57,-35 -59,-37 -62,-39', 20, 3.500, .2], ['-62,-40 -64,-46 -66,-52 -68,-54', 15, 4, .4], ['-58,-3 -54,-2 -51,-1', 7, 1, 0], ['-50,3 -38,0 -20,8', 26, 13, .3], ['-35,-8 -28,-13 -15,-22', 18, 7, .6], ['-38,-25 -20,-32', 8, 8, .5], ['-40,5 -20,0', 16, 18, .3],
  // Pacific side of the Americas
  ['-79,7 -80,0 -81,-4 -78,-9 -77,-12', 50, 4, .2], ['-76,-14 -71,-18 -71,-25 -72,-33 -74,-38 -75,-46', 36, 3, .25], ['-80,7 -87,11 -95,15 -103,18 -110,22', 75, 4, .1], ['-110,22 -116,30 -122,36 -124,41', 22, 3, .6], ['-123,48 -126,50', 6, 3, .1], ['-118,33 -121,36', 24, 4, .9],
  // Open Pacific
  ['-130,25 -160,27 -190,26 -215,28', 30, 18, .15], ['-85,8 -110,14 -140,17 -170,18 -200,20', 44, 15, .15], ['-100,3 -130,8 -160,12 -190,8', 18, 24, .2], ['-125,42 -150,44 -175,46 -200,43 -213,38', 13, 14, .15], ['-85,-3 -120,-8', 9, 18, .2], ['-145,55 -150,58', 3, 4, .6],
  ['142,33 150,30 165,27', 20, 20, .3], ['125,20 135,15 150,10', 44, 26, .2], ['128,28 140,22 155,20', 30, 24, .25], ['135,0 145,5 150,10', 18, 20, .1], ['151,-14 152,-22 152,-30 150,-36', 36, 3.500, .2], ['114,-20 112,-24 113,-32', 14, 3, .4], ['114,-8 117,-12 114,-18', 9, 4, .1], ['144,-39 138,-36', 6, 3, .1], ['155,-10 146,-11 140,-10', 12, 7, .1], ['174,-38 175,-39.500 171,-42', 7, 3, .2], ['158,-27 167,-27', 5, 2, .3],
  // North
  ['20,71 30,71 40,69', 6, 3, .8], ['52,69 60,69', 3, 3, .6], ['70,73 73,71', 3, 2, .9], ['-22,64 -24,63', 2, 2, 0],
];
const tones = ['#f6fbfd', '#d0e9f2', '#9ed2e6', '#64acd0'];
const fleet = [];
function ship(x, y, angle, laden) {
  const tone = rnd() < laden * .95 ? (rnd() < .5 ? 2 : 3) : (rnd() < .75 ? 0 : 1);
  const l = 1.8 + rnd() * 1.2, dx = Math.cos(angle) * l, dy = Math.sin(angle) * l;
  fleet.push([tone, wrap([[x - dx, y - dy], [x + dx, y + dy]], p => `M${p[0][0].toFixed(1)} ${p[0][1].toFixed(1)}L${p[1][0].toFixed(1)} ${p[1][1].toFixed(1)}`)]);
}
lanes.forEach(([s, n, spread, laden]) => {
  const pts = project(s);
  const lens = pts.slice(1).map((p, i) => Math.hypot(p[0] - pts[i][0], p[1] - pts[i][1]));
  const total = lens.reduce((a, b) => a + b, 0);
  for (let k = 0; k < n; k++) {
    let t = rnd() * total, i = 0;
    while (i < lens.length - 1 && t > lens[i]) t -= lens[i++];
    const a = pts[i], b = pts[i + 1], f = t / lens[i];
    const dir = Math.atan2(b[1] - a[1], b[0] - a[0]);
    ship(a[0] + (b[0] - a[0]) * f + gauss() * spread, a[1] + (b[1] - a[1]) * f + gauss() * spread, dir + (rnd() < .5 ? gauss() * .5 : rnd() * 3), laden);
  }
});
/* lone vessels far from any lane */
parse('12,195 29,212 74,208 90,208 137,213 144,180 146,200 112,485 146,358 165,369 197,374 219,406 273,392 262,412 578,384 500,422 553,436 528,449 672,430 560,211').forEach(([x, y], i) => ship(x, y, .3, i % 3 ? 0 : .7));

/* stack the fleet in mixed layers so no tone covers the others */
const LAYERS = 8;
for (let n = 0; n < LAYERS; n++) {
  for (let t = 0; t < tones.length; t++) {
    const tone = (t + n) % tones.length;
    const path = fleet.filter((s, i) => i % LAYERS === n && s[0] === tone).map(s => s[1]).join('');
    if (path) add(world, 'path', { d: path, class: 'ships', stroke: tones[tone] });
  }
}
```
